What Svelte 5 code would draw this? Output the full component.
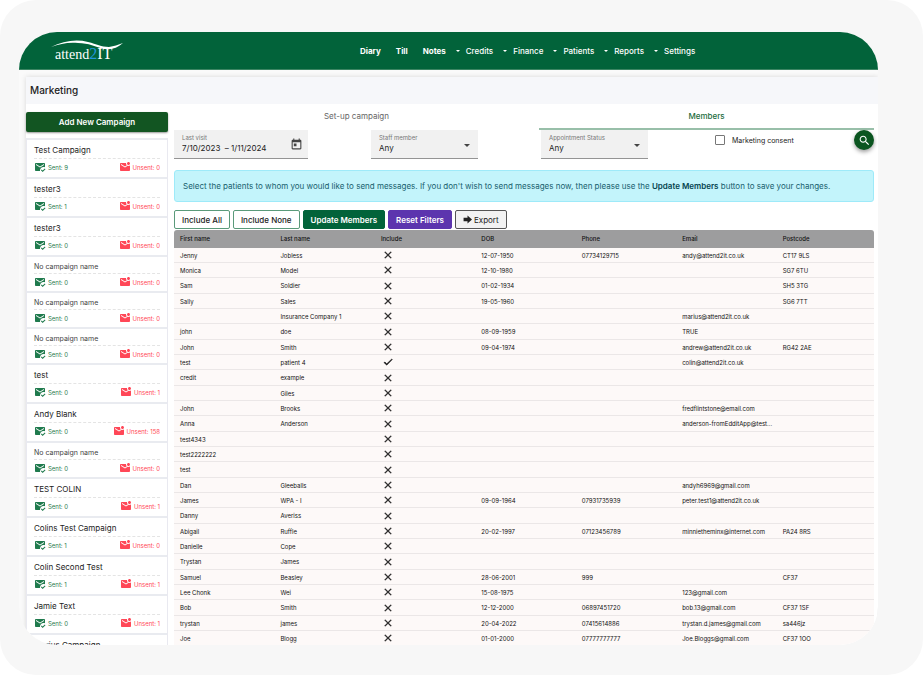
<script>
  const menus = ['Credits', 'Finance', 'Patients', 'Reports', 'Settings'];

  const campaigns = [
    { name: 'Test Campaign', sent: 9, unsent: 0 },
    { name: 'tester3', sent: 1, unsent: 0 },
    { name: 'tester3', sent: 0, unsent: 0 },
    { name: '', sent: 0, unsent: 0 },
    { name: '', sent: 0, unsent: 0 },
    { name: '', sent: 0, unsent: 0 },
    { name: 'test', sent: 0, unsent: 1 },
    { name: 'Andy Blank', sent: 0, unsent: 158 },
    { name: '', sent: 0, unsent: 0 },
    { name: 'TEST COLIN', sent: 0, unsent: 1 },
    { name: 'Colins Test Campaign', sent: 1, unsent: 0 },
    { name: 'Colin Second Test', sent: 1, unsent: 1 },
    { name: 'Jamie Text', sent: 0, unsent: 1 },
    { name: 'Marius Campaign' }
  ];

  const columns = ['First name', 'Last name', 'Include', 'DOB', 'Phone', 'Email', 'Postcode'];

  // first, last, include, dob, phone, email, postcode
  const members = [
    ['Jenny', 'Jobless', false, '12-07-1950', '07734129715', 'andy@attend2it.co.uk', 'CT17 9LS'],
    ['Monica', 'Model', false, '12-10-1980', '', '', 'SG7 6TU'],
    ['Sam', 'Soldier', false, '01-02-1934', '', '', 'SH5 3TG'],
    ['Sally', 'Sales', false, '19-05-1960', '', '', 'SG6 7TT'],
    ['', 'Insurance Company 1', false, '', '', 'marius@attend2it.co.uk', ''],
    ['john', 'doe', false, '08-09-1959', '', 'TRUE', ''],
    ['John', 'Smith', false, '09-04-1974', '', 'andrew@attend2it.co.uk', 'RG42 2AE'],
    ['test', 'patient 4', true, '', '', 'colin@attend2it.co.uk', ''],
    ['credit', 'example', false, '', '', '', ''],
    ['', 'Giles', false, '', '', '', ''],
    ['John', 'Brooks', false, '', '', 'fredflintstone@email.com', ''],
    ['Anna', 'Anderson', false, '', '', 'anderson-fromEdditApp@test...', ''],
    ['test4343', '', false, '', '', '', ''],
    ['test2222222', '', false, '', '', '', ''],
    ['test', '', false, '', '', '', ''],
    ['Dan', 'Gleeballs', false, '', '', 'andyh6969@gmail.com', ''],
    ['James', 'WPA - I', false, '09-09-1964', '07931735939', 'peter.test1@attend2it.co.uk', ''],
    ['Danny', 'Averiss', false, '', '', '', ''],
    ['Abigail', 'Ruffle', false, '20-02-1997', '07123456789', 'minnietheminx@internet.com', 'PA24 8RS'],
    ['Danielle', 'Cope', false, '', '', '', ''],
    ['Trystan', 'James', false, '', '', '', ''],
    ['Samuel', 'Beasley', false, '28-06-2001', '999', '', 'CF37'],
    ['Lee Chonk', 'Wei', false, '15-08-1975', '', '123@gmail.com', ''],
    ['Bob', 'Smith', false, '12-12-2000', '06897451720', 'bob.13@gmail.com', 'CF37 1SF'],
    ['trystan', 'james', false, '20-04-2022', '07415614886', 'trystan.d.james@gmail.com', 'sa446jz'],
    ['Joe', 'Blogg', false, '01-01-2000', '07777777777', 'Joe.Bloggs@gmail.com', 'CF37 1OO']
  ];

  let dates = '7/10/2023  – 1/11/2024';
  let consent = false;
</script>

<div class="page">
  <div class="app">
    <header>
      <a class="logo" href="#home">
        <svg class="swoosh" viewBox="0 0 72 12" aria-hidden="true">
          <path d="M0 8C12 2 25 0 37 3c9 2 13 5 21 5 5-1 9-2 14-4-6 5-11 7-18 6C44 8 38 4 27 4 17 3 9 5 0 8z" />
        </svg>
        attend<span class="two">2</span><span class="it">IT</span>
      </a>
      <nav>
        <a href="#diary"><b>Diary</b></a>
        <a href="#till"><b>Till</b></a>
        <a href="#notes"><b>Notes</b></a>
        {#each menus as menu}
          <a class="menu" href="#{menu.toLowerCase()}">{menu}</a>
        {/each}
      </nav>
    </header>

    <main>
      <h1>Marketing</h1>
      <div class="columns">
        <aside>
          <button class="add">Add New Campaign</button>
          <ul>
            {#each campaigns as c}
              <li class:unnamed={!c.name}>
                <div class="name">{c.name || 'No campaign name'}</div>
                {#if c.sent !== undefined}
                  <div class="counts">
                    <span class="sent">
                      <svg viewBox="0 0 24 24"><path d="M12 19c0-3.87 3.13-7 7-7 1.08 0 2.09.25 3 .68V6c0-1.1-.9-2-2-2H4c-1.1 0-2 .9-2 2v12c0 1.1.9 2 2 2h8.08c-.05-.33-.08-.66-.08-1zM4 6l8 5 8-5v2l-8 5-8-5V6zm13.34 16-3.54-3.54 1.41-1.41 2.12 2.12 4.24-4.24L23 16.34 17.34 22z" /></svg>
                      Sent: {c.sent}
                    </span>
                    <span class="unsent">
                      <svg viewBox="0 0 24 24"><path d="M22 8.98V18c0 1.1-.9 2-2 2H4c-1.1 0-2-.9-2-2V6c0-1.1.9-2 2-2h10.1c-.06.32-.1.66-.1 1 0 1.48.65 2.79 1.67 3.71L12 11 4 6v2l8 5 5.3-3.32c.54.2 1.1.32 1.7.32 1.13 0 2.16-.39 3-1.02zM16 5c0 1.66 1.34 3 3 3s3-1.34 3-3-1.34-3-3-3-3 1.34-3 3z" /></svg>
                      Unsent: {c.unsent}
                    </span>
                  </div>
                {/if}
              </li>
            {/each}
          </ul>
        </aside>

        <section>
          <div class="tabs" role="tablist">
            <button role="tab" aria-selected="false">Set-up campaign</button>
            <button role="tab" aria-selected="true" class="active">Members</button>
          </div>

          <div class="filters">
            <div class="field date">
              <label for="visit">Last visit</label>
              <input id="visit" type="text" bind:value={dates} />
              <svg viewBox="0 0 24 24"><path d="M19 3h-1V1h-2v2H8V1H6v2H5c-1.11 0-1.99.9-1.99 2L3 19c0 1.1.89 2 2 2h14c1.1 0 2-.9 2-2V5c0-1.1-.9-2-2-2zm0 16H5V8h14v11zM7 10h5v5H7z" /></svg>
            </div>
            <div class="field">
              <label for="staff">Staff member</label>
              <select id="staff"><option>Any</option></select>
              <span class="arrow"></span>
            </div>
            <div class="field">
              <label for="status">Appointment Status</label>
              <select id="status"><option>Any</option></select>
              <span class="arrow"></span>
            </div>
            <label class="consent">
              <input type="checkbox" bind:checked={consent} />
              Marketing consent
            </label>
            <button class="search" aria-label="Search">
              <svg viewBox="0 0 24 24"><path d="M15.5 14h-.79l-.28-.27C15.41 12.59 16 11.11 16 9.5 16 5.91 13.09 3 9.5 3S3 5.91 3 9.5 5.91 16 9.5 16c1.61 0 3.09-.59 4.23-1.57l.27.28v.79l5 4.99L20.49 19l-4.99-5zm-6 0C7.01 14 5 11.99 5 9.5S7.01 5 9.5 5 14 7.01 14 9.5 11.99 14 9.5 14z" /></svg>
            </button>
          </div>

          <p class="info">
            Select the patients to whom you would like to send messages. If you don't wish to send messages now, then please use the <b>Update Members</b> button to save your changes.
          </p>

          <div class="actions">
            <button class="outline">Include All</button>
            <button class="outline">Include None</button>
            <button class="update">Update Members</button>
            <button class="reset">Reset Filters</button>
            <button class="export">
              <svg viewBox="0 0 16 16"><path d="M1 5h7V1l8 7-8 7v-4H1z" /></svg>
              Export
            </button>
          </div>

          <table>
            <thead>
              <tr>
                {#each columns as column}
                  <th>{column}</th>
                {/each}
              </tr>
            </thead>
            <tbody>
              {#each members as row}
                <tr>
                  {#each row as cell, i}
                    {#if i === 2}
                      <td class="include">
                        <svg viewBox="0 0 24 24" role="img" aria-label={cell ? 'Included' : 'Not included'}>
                          {#if cell}
                            <path d="M9 16.17 4.83 12l-2.83 1.4L9 19.5 22.5 6l-1.4-1.4z" />
                          {:else}
                            <path d="M20 5.4 18.6 4 12 10.6 5.4 4 4 5.4 10.6 12 4 18.6 5.4 20 12 13.4 18.6 20 20 18.6 13.4 12z" />
                          {/if}
                        </svg>
                      </td>
                    {:else}
                      <td>{cell}</td>
                    {/if}
                  {/each}
                </tr>
              {/each}
            </tbody>
          </table>
        </section>
      </div>
    </main>
  </div>
</div>

<style>
  :global(body) {
    margin: 0;
    background: #fff;
  }

  .page {
    box-sizing: border-box;
    display: flex;
    height: 100vh;
    padding: 32px 45px 30px 19px;
    background: #f7f7f7;
    border-radius: 36px;
    font-family: Inter, Roboto, "Liberation Sans", sans-serif;
    font-size: 8px;
    color: #222;
  }

  button,
  input,
  select {
    font: inherit;
    color: inherit;
  }

  button {
    border: none;
    padding: 0;
    cursor: pointer;
  }

  svg {
    display: block;
    fill: currentColor;
  }

  .app {
    flex: 1;
    min-width: 0;
    overflow: hidden;
    border-radius: 38px;
    background: #fafafa;
  }

  header {
    display: grid;
    grid-template-columns: 305fr 518fr;
    align-items: center;
    height: 37px;
    padding-left: 36px;
    background: #02633a;
    border-bottom: 1px solid #3c8563;
  }

  .logo {
    position: relative;
    justify-self: start;
    padding-top: 8px;
    font: 14px/18px "Liberation Serif", serif;
    color: #fff;
    text-decoration: none;
  }

  .swoosh {
    position: absolute;
    left: -4px;
    top: 2px;
    width: 72px;
    height: 12px;
  }

  .two {
    color: #2196dd;
  }

  .two,
  .it {
    font-size: 16px;
  }

  nav {
    display: flex;
    gap: 15px;
    font-weight: 500;
  }

  nav a {
    color: #fff;
    text-decoration: none;
  }

  .menu {
    display: flex;
    align-items: center;
    gap: 6px;
    margin-left: -5px;
  }

  .menu::before {
    content: '';
    border: 2px solid transparent;
    border-top-color: #fff;
    border-bottom: none;
  }

  main {
    margin: 7px 0 0 7px;
    background: #fff;
    box-shadow: 0 0 5px #d8d8d8;
  }

  h1 {
    margin: 0;
    padding: 0 4px;
    background: #f6f7fa;
    font-size: 10px;
    line-height: 27px;
    font-weight: 500;
  }

  .columns {
    display: grid;
    grid-template-columns: 142px 1fr;
    gap: 6px;
    padding-right: 4px;
  }

  aside {
    padding-top: 8px;
  }

  .add {
    width: 100%;
    height: 20px;
    border-radius: 2px;
    background: #125522;
    box-shadow: 0 1px 2px #999;
    color: #fff;
    font-weight: 600;
  }

  ul {
    list-style: none;
    margin: 6px 0 0;
    padding: 0;
    border: 1px solid #e9e9f0;
    border-top-width: 0;
  }

  li {
    box-sizing: border-box;
    height: 39px;
    padding: 5px 7px 0;
    border-top: 2px solid #e9ebf0;
  }

  .name {
    padding-bottom: 2px;
    border-bottom: 1px dashed #e4e4e4;
    font-size: 8px;
    line-height: 11px;
  }

  .unnamed {
    height: 36px;
    padding-top: 4px;
  }

  .unnamed .name {
    padding-bottom: 1px;
    font-size: 7px;
    color: #444;
  }

  .counts {
    display: flex;
    justify-content: space-between;
    padding-top: 2px;
    font-size: 6px;
  }

  .counts span {
    display: flex;
    align-items: center;
    gap: 2px;
  }

  .counts svg {
    width: 12px;
    height: 12px;
  }

  .sent {
    color: #1f7a4d;
  }

  .unsent {
    color: #ff4757;
  }

  section {
    min-width: 0;
  }

  .tabs {
    display: grid;
    grid-template-columns: 365fr 335fr;
  }

  .tabs button {
    height: 26px;
    border-bottom: 2px solid transparent;
    background: none;
    color: #666;
  }

  .tabs .active {
    border-color: #98bfa9;
    color: #1a6b3c;
    font-weight: 500;
  }

  .filters {
    position: relative;
    display: grid;
    grid-template-columns: 197fr 170fr 174fr 159fr;
    align-items: start;
  }

  .field {
    position: relative;
    box-sizing: border-box;
    width: 107px;
    height: 29px;
    padding: 4px 8px 0;
    border-bottom: 1px solid #949494;
    background: #f1f1f1;
  }

  .date {
    width: 134px;
  }

  .field label {
    display: block;
    font-size: 6px;
    line-height: 7px;
    color: #777;
  }

  .field input,
  .field select {
    display: block;
    width: 100%;
    height: 14px;
    padding: 0;
    border: none;
    outline: none;
    background: none;
    appearance: none;
    white-space: pre;
  }

  .field svg {
    position: absolute;
    right: 5px;
    top: 8px;
    width: 13px;
    height: 13px;
    color: #444;
  }

  .arrow {
    position: absolute;
    right: 8px;
    top: 14px;
    border: 3px solid transparent;
    border-top-color: #444;
    border-bottom: none;
    pointer-events: none;
  }

  .consent {
    display: flex;
    align-items: center;
    gap: 7px;
    height: 20px;
    font-size: 7px;
  }

  .consent input {
    width: 10px;
    height: 10px;
    margin: 0;
    border: 1px solid #777;
    border-radius: 1px;
    appearance: none;
  }

  .consent input:checked {
    background: #02633a;
  }

  .search {
    position: absolute;
    right: 0;
    top: 0;
    display: grid;
    place-items: center;
    width: 20px;
    height: 20px;
    border-radius: 50%;
    background: #0b5520;
    box-shadow: 0 2px 4px #999;
    color: #fff;
  }

  .search svg {
    width: 13px;
    height: 13px;
  }

  .info {
    margin: 11px 0 8px;
    padding: 9px 8px;
    border: 1px solid #9eeaf9;
    border-radius: 3px;
    background: #c3f4fb;
    line-height: 12px;
    color: #17606d;
  }

  .info b {
    font-weight: 600;
    color: #05444f;
  }

  .actions {
    display: flex;
    gap: 3px;
    margin-bottom: 1px;
  }

  .actions button {
    height: 19px;
    padding: 0 7px;
    border: 1px solid #5a9a7a;
    border-radius: 2px;
    background: #fff;
    font-weight: 600;
  }

  .actions .outline {
    font-weight: 500;
  }

  .actions .update {
    border-color: #02633a;
    background: #02633a;
    color: #fff;
  }

  .actions .reset {
    border-color: #5c35ae;
    background: #5c35ae;
    color: #fff;
  }

  .actions .export {
    display: flex;
    align-items: center;
    gap: 2px;
    border-color: #555;
    background: #f2f2f2;
    font-weight: 400;
  }

  .export svg {
    width: 9px;
    height: 9px;
  }

  table {
    width: 100%;
    table-layout: fixed;
    border-collapse: separate;
    border-spacing: 0;
    font-size: 6px;
    line-height: 8px;
    color: #111;
  }

  th,
  td {
    box-sizing: border-box;
    height: 15px;
    padding: 1px 0 0 6px;
    text-align: left;
    white-space: nowrap;
  }

  th {
    height: 18px;
    padding-top: 0;
    background: #9d9d9e;
    font-weight: 500;
  }

  th:not(:last-child) {
    width: 14.35%;
  }

  th:first-child {
    border-top-left-radius: 3px;
  }

  th:last-child {
    border-top-right-radius: 3px;
  }

  td {
    border-bottom: 1px solid #ebe7e7;
    background: #fdf9f8;
  }

  tbody tr:nth-child(3n) td {
    height: 16px;
  }

  td.include {
    padding: 0 0 0 8px;
  }

  .include svg {
    width: 10px;
    height: 10px;
    stroke: currentColor;
  }
</style>
